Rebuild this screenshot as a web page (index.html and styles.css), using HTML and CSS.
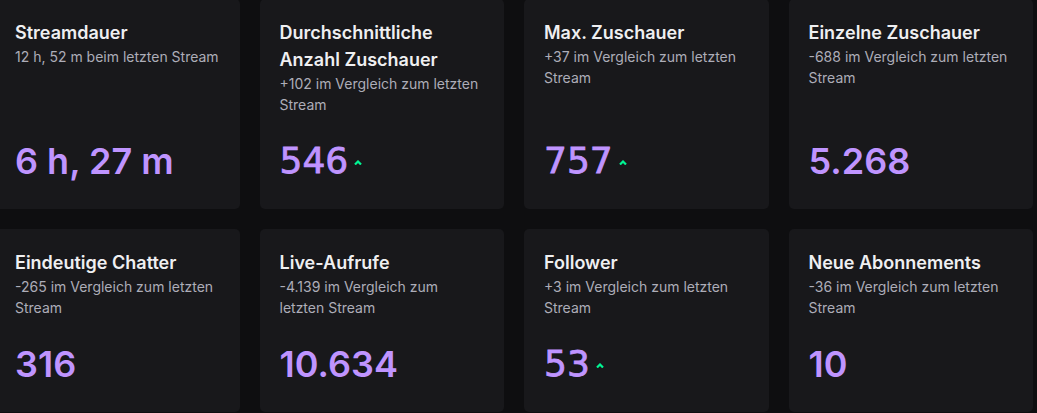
FILE: index.html
```html
<!DOCTYPE html>
<html lang="de">
<head>
    <meta charset="UTF-8">
    <title>Stream-Zusammenfassung</title>
    <link rel="stylesheet" href="styles.css">
</head>
<body>
    <div class="stats">
        <div class="card">
            <div class="title">Streamdauer</div>
            <div class="sub">12 h, 52 m beim letzten Stream</div>
            <div class="value">6 h, 27 m</div>
        </div>
        <div class="card">
            <div class="title">Durchschnittliche Anzahl Zuschauer</div>
            <div class="sub">+102 im Vergleich zum letzten Stream</div>
            <div class="value up">546<svg class="arrow" width="8" height="5" viewBox="0 0 8 5"><path d="M1 4.5 L4 1.5 L7 4.5" /></svg></div>
        </div>
        <div class="card">
            <div class="title">Max. Zuschauer</div>
            <div class="sub">+37 im Vergleich zum letzten Stream</div>
            <div class="value up">757<svg class="arrow" width="8" height="5" viewBox="0 0 8 5"><path d="M1 4.5 L4 1.5 L7 4.5" /></svg></div>
        </div>
        <div class="card">
            <div class="title">Einzelne Zuschauer</div>
            <div class="sub">-688 im Vergleich zum letzten Stream</div>
            <div class="value">5.268</div>
        </div>

        <div class="card">
            <div class="title">Eindeutige Chatter</div>
            <div class="sub">-265 im Vergleich zum letzten Stream</div>
            <div class="value">316</div>
        </div>
        <div class="card">
            <div class="title">Live-Aufrufe</div>
            <div class="sub">-4.139 im Vergleich zum letzten Stream</div>
            <div class="value">10.634</div>
        </div>
        <div class="card">
            <div class="title">Follower</div>
            <div class="sub">+3 im Vergleich zum letzten Stream</div>
            <div class="value up">53<svg class="arrow" width="8" height="5" viewBox="0 0 8 5"><path d="M1 4.5 L4 1.5 L7 4.5" /></svg></div>
        </div>
        <div class="card">
            <div class="title">Neue Abonnements</div>
            <div class="sub">-36 im Vergleich zum letzten Stream</div>
            <div class="value">10</div>
        </div>
    </div>
</body>
</html>
```
FILE: styles.css
```css
*{
    box-sizing: border-box;
}

body{
    margin: 0;
    background-color: #0e0e10;
    font-family: Inter, "Liberation Sans", sans-serif;
    overflow: hidden;
}

.stats{
    display: grid;
    grid-template-columns: repeat(4, 1fr);
    gap: 20px;
    width: 1038px;
    margin: -1px 0 0 -5px;
}

.card{
    display: flex;
    flex-direction: column;
    background-color: #18181b;
    border-radius: 5px;
    padding: 20px 20px 21px;
}

.title{
    color: #efeff1;
    font-size: 18px;
    font-weight: 600;
    line-height: 27px;
}

.sub{
    color: #adadb8;
    font-size: 14px;
    line-height: 21px;
}

.value{
    margin-top: auto;
    padding-top: 19px;
    color: #bf94ff;
    font-size: 36px;
    font-weight: 600;
    line-height: 54px;
}

.value.up{
    font-family: "DejaVu Sans", sans-serif;
    font-weight: normal;
    -webkit-text-stroke: 0.8px #bf94ff;
}

.arrow{
    vertical-align: 8px;
    margin-left: 6px;
}

.arrow path{
    fill: none;
    stroke: #00f593;
    stroke-width: 2.2;
}
```
